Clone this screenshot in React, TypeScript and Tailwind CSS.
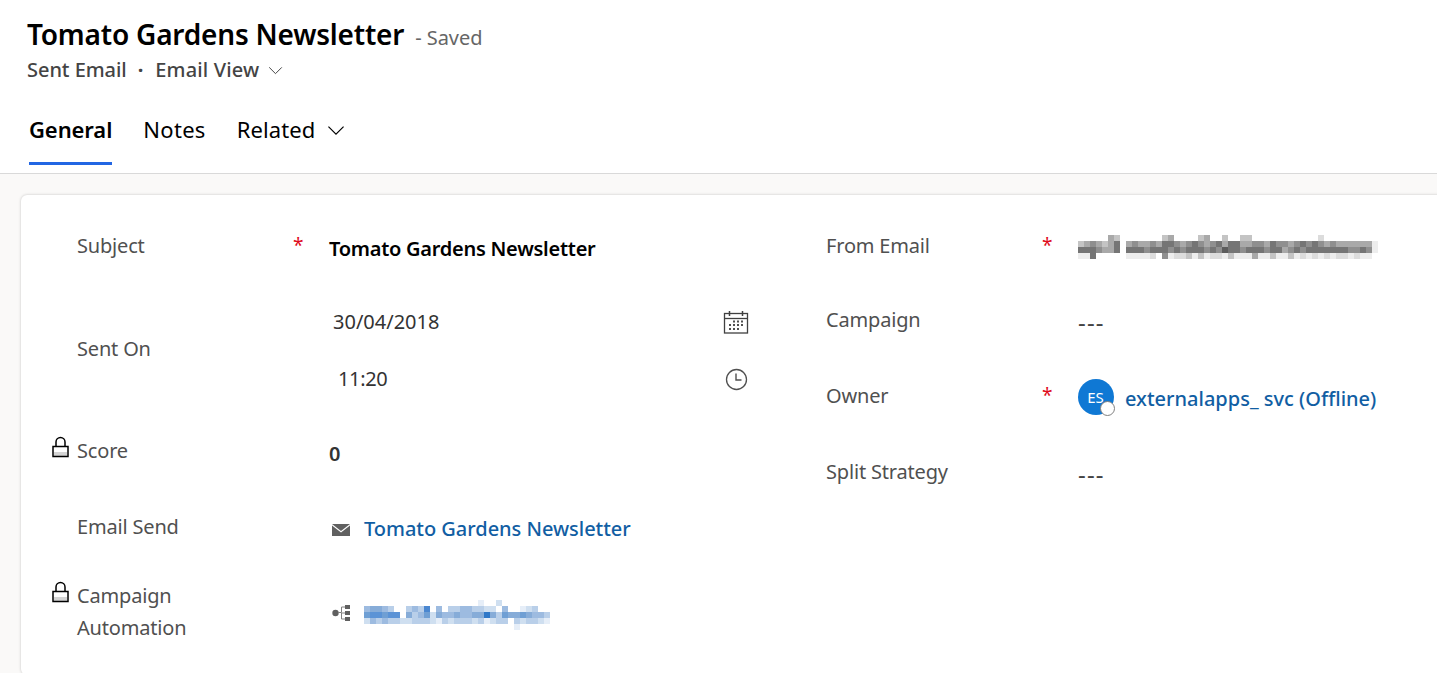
import { ReactNode } from 'react'

const EMAIL_CELLS = [
  '00000430000000340000340030033000000000002000000000',
  '34543460454454665456545646644554655456565454444441',
  '66654460666566656566656576656665664565666666655651',
  '11600000111120512231312213111411311312121212212110',
]
const GREY_CELLS = ['#ffffff', '#ededed', '#dcdcdc', '#c4c4c4', '#a9a9a9', '#8f8f8f', '#757575', '#5d5d5d']

const LINK_CELLS = [
  '0000000000000000000100200000000',
  '4554300343804033443322040012300',
  '6776770534625445445595365565443',
  '2434332233321323332312330323321',
  '0000000000000000000000000100000',
]
const BLUE_CELLS = ['#ffffff', '#e6eef8', '#cfdff0', '#b9cfe9', '#9dbbe0', '#86acd8', '#6f9fd4', '#5b93d6', '#4a87d0', '#2f78c8']

const Mosaic = ({ rows, palette }: { rows: string[]; palette: string[] }) => (
  <svg width={rows[0].length * 6} height={rows.length * 6} shapeRendering="crispEdges">
    {rows.map((row, y) =>
      row.split('').map((cell, x) => (
        <rect key={`${x}-${y}`} x={x * 6} y={y * 6} width="6" height="6" fill={palette[Number(cell)]} />
      )),
    )}
  </svg>
)

const Chevron = ({ size, className }: { size: number; className?: string }) => (
  <svg width={size} height={size * 0.6} viewBox="0 0 16 10" fill="none" stroke="currentColor" strokeWidth="1.1" className={className}>
    <path d="M1 1.5l7 7 7-7" />
  </svg>
)

const LockIcon = () => (
  <svg width="17" height="22" viewBox="0 0 17 22" fill="none" className="absolute top-[1px] left-[-25px]">
    <rect x="2" y="16" width="13" height="4" fill="#d4d4d4" />
    <rect x="1" y="10.5" width="15" height="10" stroke="#000" strokeWidth="1.5" />
    <path d="M4 10.5V6a4.5 4.5 0 0 1 9 0v4.5" stroke="#000" strokeWidth="1.5" />
  </svg>
)

const CalendarIcon = () => (
  <svg width="26" height="24" viewBox="0 0 26 24" fill="none" stroke="#404040">
    <rect x="1.5" y="3.5" width="23" height="19.5" strokeWidth="1.3" />
    <path d="M1.5 8.5h23" strokeWidth="1.3" />
    <path d="M6.5 1v5M19.5 1v5" strokeWidth="1.5" />
    <path
      d="M10 11.5h2M14 11.5h2M18 11.5h2M6 15h2M10 15h2M14 15h2M18 15h2M6 19h2M10 19h2M14 19h2"
      stroke="#505050"
      strokeWidth="1.8"
    />
  </svg>
)

const ClockIcon = () => (
  <svg width="23" height="23" viewBox="0 0 23 23" fill="none" stroke="#505050" strokeWidth="1.3">
    <circle cx="11.5" cy="11.5" r="10" />
    <path d="M11 5.5v6.5h5.5" strokeWidth="1.4" />
  </svg>
)

const MailIcon = () => (
  <svg width="18" height="12" viewBox="0 0 18 12" className="mt-[1px]">
    <path d="M0 0h18L9 7z" fill="#606060" />
    <path d="M0 1.5v10.5h18V1.5L9 8.5z" fill="#606060" />
  </svg>
)

const TreeIcon = () => (
  <svg width="18" height="18" viewBox="0 0 18 18" fill="#606060" className="mb-[4px]">
    <circle cx="3.5" cy="9" r="3.2" />
    <path d="M6 8.5h3.5V3H13M9.5 9H13M9.5 9v6H13" fill="none" stroke="#808080" />
    <rect x="13" y="1" width="5" height="4" />
    <rect x="13" y="7" width="5" height="4" />
    <rect x="13" y="13" width="5" height="4" />
  </svg>
)

const Field = ({
  label,
  locked,
  required,
  height,
  labelClass = 'mb-[2px]',
  children,
}: {
  label: ReactNode
  locked?: boolean
  required?: boolean
  height: string
  labelClass?: string
  children?: ReactNode
}) => (
  <div className={`flex items-center ${height}`}>
    <div className={`relative w-[252px] shrink-0 text-[20px] leading-8 tracking-[-0.18px] text-[#505050] ${labelClass}`}>
      {locked && <LockIcon />}
      {label}
      {required && <span className="absolute top-[3px] right-[24px] w-3 text-[19px] leading-6 text-[#e00b1c]">*</span>}
    </div>
    <div className="min-w-0 flex-1">{children}</div>
  </div>
)

const Dashes = () => <span className="text-[24px] leading-8 tracking-[1.2px] text-[#444]">---</span>

export default function App() {
  return (
    <div className="flex h-[673px] w-[1437px] flex-col overflow-hidden bg-[#faf9f8] font-['Noto_Sans',sans-serif]">
      <header className="h-[174px] shrink-0 border-b border-[#d9d9d9] bg-white px-[27px] pt-[14px]">
        <div className="flex items-baseline">
          <h1 className="text-[28px] leading-10 font-semibold tracking-[-0.2px] text-black">Tomato Gardens Newsletter</h1>
          <span className="ml-[11px] text-[20px] tracking-[-0.05px] text-[#666]">- Saved</span>
        </div>
        <div className="mt-[2px] flex items-center text-[20px] leading-7 font-medium text-[#444]">
          <span className="tracking-[-0.05px]">Sent Email</span>
          <span className="ml-[11px] font-bold">·</span>
          <span className="ml-[12px] tracking-[0.15px]">Email View</span>
          <Chevron size={15} className="mt-[1px] ml-[9px]" />
        </div>
        <nav className="mt-[25px] ml-[2px] flex text-[22px] text-black">
          <div className="mr-[31px] h-[56px] border-b-[3px] border-[#2266e3] pt-[4px] leading-8 font-semibold tracking-[-0.1px]">General</div>
          <div className="mr-[31px] pt-[4px] leading-8 tracking-[0.3px]">Notes</div>
          <div className="flex items-start pt-[4px] leading-8 tracking-[0.1px]">
            Related
            <Chevron size={18} className="mt-[12px] ml-[12px]" />
          </div>
        </nav>
      </header>

      <main className="flex-1 pt-[21px] pl-[21px]">
        <section className="flex h-[480px] w-[1440px] rounded-md bg-white pt-[14px] pl-[56px] shadow-[0_0_3px_rgba(0,0,0,0.22)]">
          <div className="w-[749px] shrink-0">
            <Field label="Subject" required height="h-[76px]">
              <span className="mt-[4px] block text-[20px] leading-8 font-semibold tracking-[-0.26px] text-black">Tomato Gardens Newsletter</span>
            </Field>
            <Field label="Sent On" labelClass="mb-[4px]" height="h-[131px]">
              <div className="w-[420px] text-[20px] leading-8 text-[#333]">
                <div className="flex h-[57px] items-center justify-between pl-[4px]">
                  <span>30/04/2018</span>
                  <CalendarIcon />
                </div>
                <div className="flex h-[57px] items-center justify-between pr-[1px] pl-[9px]">
                  <span className="tracking-[-0.35px]">11:20</span>
                  <ClockIcon />
                </div>
              </div>
            </Field>
            <Field label="Score" locked labelClass="mb-[4px]" height="h-[74px]">
              <span className="mt-[2px] block text-[20px] leading-8 font-semibold text-[#333]">0</span>
            </Field>
            <Field label="Email Send" height="h-[76px]">
              <div className="mt-[2px] flex items-center gap-[14px] pl-[3px]">
                <MailIcon />
                <span className="text-[20px] leading-8 font-medium tracking-[-0.03px] text-[#115ea3]">Tomato Gardens Newsletter</span>
              </div>
            </Field>
            <Field
              label={
                <>
                  Campaign
                  <br />
                  Automation
                </>
              }
              locked
              labelClass=""
              height="h-[92px]"
            >
              <div className="mt-[6px] flex items-center gap-[14px] pl-[3px]">
                <TreeIcon />
                <Mosaic rows={LINK_CELLS} palette={BLUE_CELLS} />
              </div>
            </Field>
          </div>

          <div className="flex-1">
            <Field label="From Email" required height="h-[76px]">
              <Mosaic rows={EMAIL_CELLS} palette={GREY_CELLS} />
            </Field>
            <Field label="Campaign" labelClass="mb-[4px]" height="h-[74px]">
              <Dashes />
            </Field>
            <Field label="Owner" required height="h-[76px]">
              <div className="flex items-center gap-[11px]">
                <div className="relative flex h-9 w-9 items-center justify-center rounded-full bg-[#0f78d4] pr-[1px] text-[15px] text-white">
                  ES
                  <span className="absolute right-[-1px] bottom-[-1px] h-[15px] w-[15px] rounded-full border-[1.5px] border-[#7f7f7f] bg-white" />
                </div>
                <span className="mt-[4px] text-[20px] leading-8 font-medium text-[#115ea3]">externalapps_ svc (Offline)</span>
              </div>
            </Field>
            <Field label="Split Strategy" height="h-[76px]">
              <span className="mt-[2px] block">
                <Dashes />
              </span>
            </Field>
          </div>
        </section>
      </main>
    </div>
  )
}
